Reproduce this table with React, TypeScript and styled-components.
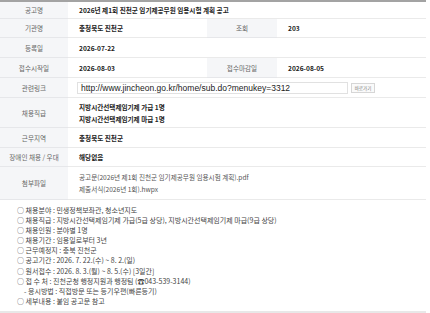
import styled, { createGlobalStyle } from "styled-components";

const GlobalStyle = createGlobalStyle`
  html, body {
    margin: 0;
    padding: 0;
    background: #ffffff;
  }
  body {
    font-family: "Noto Sans CJK KR", "Noto Sans", sans-serif;
    color: #333;
  }
  * {
    box-sizing: border-box;
  }
`;

const Wrap = styled.div`
  width: 426px;
`;

const Table = styled.div`
  display: grid;
  grid-template-columns: 68px 139px 70px 149px;
  grid-template-rows: 17px 19px 20px 20px 20px 30px 20px 19px 33px;
  border-top: 2px solid #a3a3a3;
`;

const Label = styled.div`
  display: flex;
  align-items: center;
  justify-content: center;
  background: #f5f6f8;
  border-bottom: 1px solid #e6e7ea;
  color: #666;
  font-size: 6.6px;
  white-space: nowrap;
`;

const Value = styled.div<{ $span?: number; $light?: boolean }>`
  grid-column: span ${(p) => p.$span || 1};
  display: flex;
  flex-direction: column;
  justify-content: center;
  gap: 4px;
  padding-left: 11px;
  border-bottom: 1px solid #eaeaea;
  color: ${(p) => (p.$light ? "#555" : "#222")};
  font-weight: ${(p) => (p.$light ? 400 : 700)};
  font-size: 6.6px;
  line-height: 8px;
  white-space: nowrap;
  overflow: hidden;
`;

const LinkCell = styled.div`
  grid-column: span 3;
  display: flex;
  align-items: center;
  gap: 3px;
  padding-left: 9px;
  border-bottom: 1px solid #eaeaea;
`;

const UrlBox = styled.div`
  width: 271px;
  height: 12px;
  border: 1px solid #e1e1e1;
  padding-left: 3px;
  display: flex;
  align-items: center;
  font-family: "Liberation Sans", Arial, sans-serif;
  font-size: 8.5px;
  color: #222;
  white-space: nowrap;
  overflow: hidden;
`;

const GoButton = styled.button`
  width: 24px;
  height: 10px;
  padding: 0;
  border: 1px solid #d6d6d6;
  background: #fafafa;
  color: #777;
  font-family: "Noto Sans CJK KR", sans-serif;
  font-size: 4.5px;
  line-height: 8px;
`;

const Notice = styled.ul`
  list-style: none;
  margin: 0;
  padding: 5px 0 5px 17px;
  border-bottom: 2px solid #e8e8e8;
  font-size: 7px;
  line-height: 10.1px;
  color: #444;
`;

const NoticeItem = styled.li<{ $sub?: boolean }>`
  white-space: nowrap;
  padding-left: ${(p) => (p.$sub ? "7px" : "0")};
`;

const notices = [
  { text: "○ 채용분야 : 민생정책보좌관, 청소년지도" },
  {
    text: "○ 채용직급 : 지방시간선택제임기제 가급(5급 상당), 지방시간선택제임기제 마급(9급 상당)",
  },
  { text: "○ 채용인원 : 분야별 1명" },
  { text: "○ 채용기간 : 임용일로부터 3년" },
  { text: "○ 근무예정지 : 충북 진천군" },
  { text: "○ 공고기간 : 2026. 7. 22.(수) ~ 8. 2.(일)" },
  { text: "○ 원서접수 : 2026. 8. 3.(월) ~ 8. 5.(수) [3일간]" },
  { text: "○ 접 수 처 : 진천군청 행정지원과 행정팀 (☎043-539-3144)" },
  { text: "- 응시방법 : 직접방문 또는 등기우편(빠른등기)", sub: true },
  { text: "○ 세부내용 : 붙임 공고문 참고" },
];

export default function App() {
  return (
    <>
      <GlobalStyle />
      <Wrap>
        <Table>
          <Label>공고명</Label>
          <Value $span={3}>2026년 제1회 진천군 임기제공무원 임용시험 계획 공고</Value>

          <Label>기관명</Label>
          <Value>충청북도 진천군</Value>
          <Label>조회</Label>
          <Value>203</Value>

          <Label>등록일</Label>
          <Value $span={3}>2026-07-22</Value>

          <Label>접수시작일</Label>
          <Value>2026-08-03</Value>
          <Label>접수마감일</Label>
          <Value>2026-08-05</Value>

          <Label>관련링크</Label>
          <LinkCell>
            <UrlBox>http://www.jincheon.go.kr/home/sub.do?menukey=3312</UrlBox>
            <GoButton type="button">바로가기</GoButton>
          </LinkCell>

          <Label>채용직급</Label>
          <Value $span={3}>
            <span>지방시간선택제임기제 가급 1명</span>
            <span>지방시간선택제임기제 마급 1명</span>
          </Value>

          <Label>근무지역</Label>
          <Value $span={3}>충청북도 진천군</Value>

          <Label>장애인 채용 / 우대</Label>
          <Value $span={3}>해당없음</Value>

          <Label>첨부파일</Label>
          <Value $span={3} $light>
            <span>공고문(2026년 제1회 진천군 임기제공무원 임용시험 계획).pdf</span>
            <span>제출서식(2026년 1회).hwpx</span>
          </Value>
        </Table>
        <Notice>
          {notices.map((n, i) => (
            <NoticeItem key={i} $sub={n.sub}>
              {n.text}
            </NoticeItem>
          ))}
        </Notice>
      </Wrap>
    </>
  );
}
